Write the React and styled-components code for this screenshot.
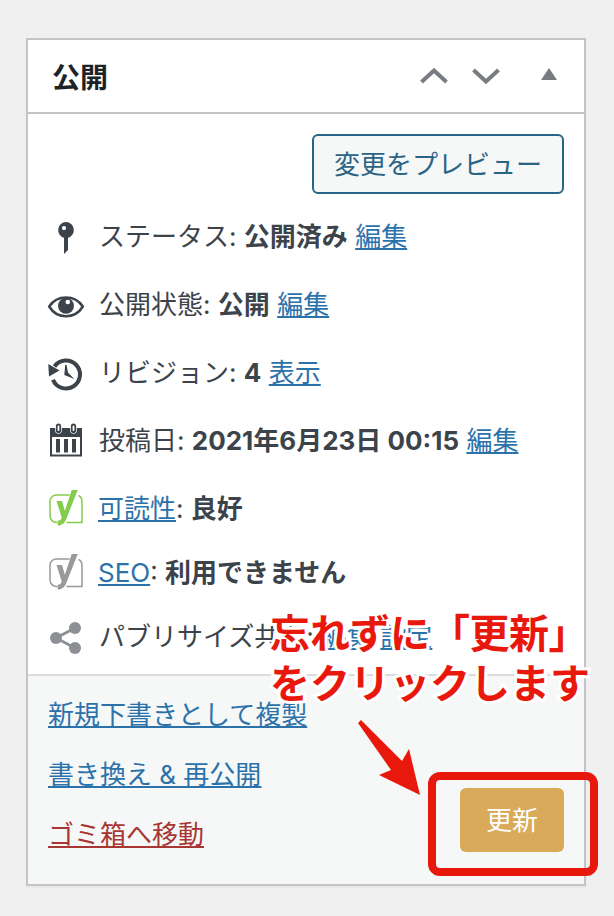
import styled, { createGlobalStyle, css } from 'styled-components';

const GlobalStyle = createGlobalStyle`
  * {
    box-sizing: border-box;
  }

  body {
    margin: 0;
    background: #f0f0f1;
    color: #3c434a;
    font-family: Inter, 'Noto Sans CJK JP', sans-serif;
    font-size: 26px;
  }
`;

const PinIcon = () => (
  <Icon viewBox="0 0 40 40">
    <path
      fillRule="evenodd"
      d="M20 5a8 8 0 0 1 2 15.700V33l-4 4V20.700A8 8 0 0 1 20 5zm-2 4a2 2 0 1 0 0 4.200 2 2 0 0 0 0-4.200z"
    />
  </Icon>
);

const EyeIcon = () => (
  <Icon viewBox="0 0 40 40">
    <path
      d="M3.200 21.500C11 9.500 29 9.500 36.800 21.500C29 34.500 11 34.500 3.200 21.500z"
      fill="none"
      stroke="currentColor"
      strokeWidth="2.500"
    />
    <circle cx="20" cy="20.800" r="8" />
    <circle cx="21.800" cy="17" r="2.300" fill="#fff" />
  </Icon>
);

const HistoryIcon = () => (
  <Icon viewBox="0 0 40 40">
    <path
      d="M7 26.700A14 14 0 1 0 8.500 13.500"
      fill="none"
      stroke="currentColor"
      strokeWidth="4"
    />
    <path d="M2.300 11L13.500 17.500L3 23.500z" />
    <path d="M19.200 11.800h1.300l1.500 7.700 6.300 6.600-10-4.100z" />
  </Icon>
);

const CalendarIcon = () => (
  <Icon viewBox="0 0 40 40">
    <path
      fillRule="evenodd"
      d="M4 7h32v28.500H4zM6 16v17.500h28V16z"
    />
    <path d="M10 18h4v13.500h-4zM18 18h4v13.500h-4zM26 18h4v13.500h-4z" />
    <path
      d="M12.500 9.500V5M27.500 9.500V5"
      fill="none"
      stroke="#fff"
      strokeWidth="6.600"
      strokeLinecap="round"
    />
    <path
      d="M12.500 9.500V5M27.500 9.500V5"
      fill="none"
      stroke="currentColor"
      strokeWidth="5.200"
      strokeLinecap="round"
    />
    <path
      d="M12.500 9V5.500M27.500 9V5.500"
      fill="none"
      stroke="#fff"
      strokeWidth="1.800"
      strokeLinecap="round"
    />
  </Icon>
);

const YoastIcon = ({ color }) => (
  <Icon viewBox="0.5 1.5 40 40" $color={color}>
    <path
      d="M24 7.500H10.500a6.500 6.500 0 0 0-6 6.500v14.500a6.500 6.500 0 0 0 6.500 6.500h1M21 35h15.500V14c0-3-1.200-5-3.500-6"
      fill="none"
      stroke="currentColor"
      strokeWidth="1.500"
    />
    <path d="M26.200 2.500h6L20.800 31.500c-1.700 4.300-4.200 6.500-8.600 6.500v-4.700c2.300 0 3.600-1.300 4-3.300L11 13.500h5.500l2.900 9.800z" />
  </Icon>
);

const ShareIcon = () => (
  <Icon viewBox="0 -1 40 40" $color="#8c8f94">
    <path
      d="M29 10L10 20l19 10"
      fill="none"
      stroke="currentColor"
      strokeWidth="2.800"
    />
    <circle cx="10" cy="20" r="6" />
    <circle cx="29" cy="10" r="6" />
    <circle cx="29" cy="30" r="6" />
  </Icon>
);

function StatusRow({ icon, label, value, action, compact }) {
  return (
    <Row $compact={compact}>
      {icon}
      <RowText $compact={compact}>
        {label}: {value && <strong>{value}</strong>} {action}
      </RowText>
    </Row>
  );
}

function App() {
  return (
    <>
      <GlobalStyle />
      <Page>
        <Panel>
          <Header>
            <Title>公開</Title>
            <Controls>
              <Chevron viewBox="0 0 28 16">
                <path d="M1.500 14L14 2.500L26.500 14" />
              </Chevron>
              <Chevron viewBox="0 0 28 16">
                <path d="M1.500 2L14 13.500L26.500 2" />
              </Chevron>
              <Toggle viewBox="0 0 16 12">
                <path d="M8 0l8 12H0z" />
              </Toggle>
            </Controls>
          </Header>

          <Preview>
            <PreviewButton>変更をプレビュー</PreviewButton>
          </Preview>

          <Rows>
            <StatusRow
              icon={<PinIcon />}
              label="ステータス"
              value="公開済み"
              action={<Link>編集</Link>}
            />
            <StatusRow
              icon={<EyeIcon />}
              label="公開状態"
              value="公開"
              action={<Link>編集</Link>}
            />
            <StatusRow
              icon={<HistoryIcon />}
              label="リビジョン"
              value="4"
              action={<Link>表示</Link>}
            />
            <StatusRow
              icon={<CalendarIcon />}
              label="投稿日"
              value="2021年6月23日 00:15"
              action={<Link>編集</Link>}
            />
            <CompactRows>
              <StatusRow
                compact
                icon={<YoastIcon color="#84cc4c" />}
                label={<Link>可読性</Link>}
                value="良好"
              />
              <StatusRow
                compact
                icon={<YoastIcon color="#999" />}
                label={<Link>SEO</Link>}
                value="利用できません"
              />
              <Row $compact>
                <ShareIcon />
                <RowText>
                  パブリサイズ共有: <Link>編集</Link> <Link>設定</Link>
                </RowText>
              </Row>
            </CompactRows>
          </Rows>

          <Footer>
            <FooterLinks>
              <Link>新規下書きとして複製</Link>
              <Link>書き換え &amp; 再公開</Link>
              <Link $danger>ゴミ箱へ移動</Link>
            </FooterLinks>
            <UpdateButton>更新</UpdateButton>
          </Footer>
        </Panel>

        <Note>
          忘れずに<Quoted>「更新」</Quoted>
          <br />
          をクリックします
        </Note>
        <Arrow viewBox="0 0 64 76">
          <path d="M3 0L44 41L51 29L62 75L21 55L33 50L0 3z" />
        </Arrow>
        <Highlight />
      </Page>
    </>
  );
}

export default App;

const Page = styled.div`
  position: relative;
  height: 916px;
  padding: 38px 28px 30px 26px;
  overflow: hidden;
`;

const Panel = styled.section`
  display: flex;
  flex-direction: column;
  height: 848px;
  border: 2px solid #c3c4c7;
  background: #fff;
  box-shadow: 0 2px 2px rgba(0, 0, 0, 0.04);
`;

const Header = styled.header`
  display: flex;
  align-items: center;
  justify-content: space-between;
  height: 74px;
  padding: 0 27px 0 24px;
  border-bottom: 2px solid #c3c4c7;
`;

const Title = styled.h2`
  margin: 0;
  padding-top: 3px;
  color: #1d2327;
  font-size: 28px;
  font-weight: 700;
  line-height: 40px;
`;

const Controls = styled.div`
  display: flex;
  align-items: center;
  gap: 24px;
`;

const Chevron = styled.svg`
  width: 28px;
  height: 16px;
  fill: none;
  stroke: #787c82;
  stroke-width: 4;
`;

const Toggle = styled.svg`
  width: 16px;
  height: 12px;
  margin: 0 0 4px 17px;
  fill: #787c82;
`;

const Preview = styled.div`
  display: flex;
  justify-content: flex-end;
  padding: 20px 20px 0;
`;

const buttonStyle = css`
  padding: 0 0 3px;
  border-radius: 6px;
  font-family: inherit;
  font-size: 26px;
`;

const PreviewButton = styled.button`
  ${buttonStyle}
  width: 252px;
  height: 60px;
  border: 2px solid #2a6485;
  background: #f6f7f7;
  color: #2a6485;
`;

const Rows = styled.div`
  flex: 1;
  padding: 9px 20px 0;
`;

const CompactRows = styled.div`
  padding-top: 2px;
`;

const Row = styled.div`
  display: flex;
  align-items: center;
  height: ${({ $compact }) => ($compact ? '64px' : '68px')};
`;

const RowText = styled.div`
  margin-left: ${({ $compact }) => ($compact ? '12px' : '13px')};
  line-height: 40px;
  white-space: nowrap;
`;

const Icon = styled.svg`
  flex: none;
  width: 40px;
  height: 40px;
  margin-left: -2px;
  color: ${({ $color }) => $color || '#3c434a'};
  fill: currentColor;
`;

const Link = styled.a`
  color: ${({ $danger }) => ($danger ? '#a83633' : '#2c72aa')};
  text-decoration: underline;
  text-decoration-thickness: 2px;
  text-decoration-skip-ink: none;
  text-underline-offset: 2px;
`;

const Footer = styled.footer`
  display: flex;
  align-items: flex-end;
  justify-content: space-between;
  height: 210px;
  padding: 0 20px;
  border-top: 2px solid #dcdcde;
  background: #f6f7f7;
`;

const FooterLinks = styled.div`
  display: flex;
  flex-direction: column;
  align-items: flex-start;
  padding-bottom: 19px;
  line-height: 60px;
`;

const UpdateButton = styled.button`
  ${buttonStyle}
  width: 104px;
  height: 64px;
  margin-bottom: 32px;
  border: 0;
  background: #d8aa59;
  color: #fff;
`;

// Annotation layer drawn over the panel
const Note = styled.p`
  position: absolute;
  top: 606px;
  left: 270px;
  margin: 0;
  color: #e8190c;
  font-family: 'Noto Sans CJK JP', sans-serif;
  font-size: 40px;
  font-weight: 700;
  line-height: 50px;
  white-space: nowrap;
  paint-order: stroke fill;
  -webkit-text-stroke: 6px #fff;
`;

const Quoted = styled.span`
  letter-spacing: -0.5px;
`;

const Arrow = styled.svg`
  position: absolute;
  top: 720px;
  left: 358px;
  width: 64px;
  height: 76px;
  fill: #e8190c;
`;

const Highlight = styled.div`
  position: absolute;
  top: 772px;
  left: 428px;
  width: 170px;
  height: 104px;
  border: 8px solid #e8190c;
  border-radius: 12px;
`;
